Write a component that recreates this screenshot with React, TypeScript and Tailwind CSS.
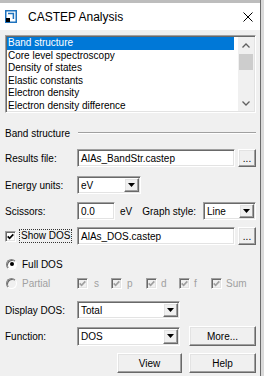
import React from "react";

const sunken =
  "border border-t-[#a0a0a0] border-l-[#a0a0a0] border-b-white border-r-white shadow-[inset_1px_1px_0_#696969,inset_-1px_-1px_0_#e3e3e3]";
const raised =
  "border border-t-white border-l-white border-b-[#696969] border-r-[#696969] shadow-[inset_-1px_-1px_0_#a0a0a0,inset_1px_1px_0_#e3e3e3] bg-[#f0f0f0]";

const listItems = [
  "Band structure",
  "Core level spectroscopy",
  "Density of states",
  "Elastic constants",
  "Electron density",
  "Electron density difference",
];

function DownArrow() {
  return (
    <svg width="7" height="4" viewBox="0 0 7 4">
      <path d="M0 0h7L3.5 4z" fill="#000" />
    </svg>
  );
}

function Chevron({ up }: { up?: boolean }) {
  return (
    <svg width="8" height="5" viewBox="0 0 8 5">
      <path
        d={up ? "M0.5 4.5L4 1l3.5 3.5" : "M0.5 0.5L4 4l3.5-3.5"}
        stroke="#606060"
        strokeWidth="1.3"
        fill="none"
      />
    </svg>
  );
}

function Select({ value, className = "" }: { value: string; className?: string }) {
  return (
    <div className={`${sunken} bg-white flex items-stretch p-px ${className}`}>
      <span className="flex-1 flex items-center pl-[2px] whitespace-nowrap">{value}</span>
      <div className={`${raised} w-[15px] flex items-center justify-center`}>
        <DownArrow />
      </div>
    </div>
  );
}

function TextBox({ value, className = "" }: { value: string; className?: string }) {
  return (
    <div className={`${sunken} bg-white flex items-center pl-[3px] whitespace-nowrap ${className}`}>
      {value}
    </div>
  );
}

function Button({ label, className = "" }: { label: string; className?: string }) {
  return (
    <div className={`${raised} flex items-center justify-center ${className}`}>{label}</div>
  );
}

function Check({ checked, disabled }: { checked?: boolean; disabled?: boolean }) {
  return (
    <div
      className={`${sunken} w-[11px] h-[11px] shrink-0 flex items-center justify-center ${
        disabled ? "bg-[#f0f0f0]" : "bg-white"
      }`}
    >
      {checked && (
        <svg width="7" height="7" viewBox="0 0 7 7">
          <path
            d="M0.7 3.4L2.6 5.3L6.3 1.4"
            stroke={disabled ? "#a0a0a0" : "#000"}
            strokeWidth="1.7"
            fill="none"
          />
        </svg>
      )}
    </div>
  );
}

function Radio({ checked, disabled }: { checked?: boolean; disabled?: boolean }) {
  return (
    <div
      className={`w-[11px] h-[11px] shrink-0 rounded-full border border-t-[#808080] border-l-[#808080] border-b-white border-r-white shadow-[inset_1px_1px_0_#696969] flex items-center justify-center ${
        disabled ? "bg-[#f0f0f0]" : "bg-white"
      }`}
    >
      {checked && <div className="w-[4px] h-[4px] rounded-full bg-black" />}
    </div>
  );
}

export default function App() {
  return (
    <div className="w-[264px] h-[376px] overflow-hidden flex bg-[#dadada] font-['Liberation_Sans',Arial,sans-serif] text-[10px] text-black">
      <div className="w-[261px] flex flex-col border-r border-[#6b6b6b]">
        <div className="h-[3px] bg-[#bdbdbd]" />
        <header className="h-[27px] bg-white flex items-center pl-[5px] pr-[7px]">
          <svg width="12" height="13" viewBox="0 0 12 13">
            <rect x="0.75" y="0.75" width="10.5" height="11.5" fill="white" stroke="#1e73be" strokeWidth="1.5" />
            <path d="M3 3.6H8.4V9" stroke="#1e73be" strokeWidth="1.5" fill="none" />
            <rect x="1" y="8" width="4" height="4" fill="#000" />
          </svg>
          <span className="ml-[11px] text-[12px] leading-none">CASTEP Analysis</span>
          <svg className="ml-auto" width="10" height="10" viewBox="0 0 10 10">
            <path d="M0.5 0.5L9.5 9.5M9.5 0.5L0.5 9.5" stroke="#000" strokeWidth="1" />
          </svg>
        </header>

        <main className="flex-1 bg-[#f0f0f0] pl-[5px] pr-[4px] flex flex-col">
          <div className={`${sunken} mt-[5px] h-[78px] bg-white flex p-px overflow-hidden shrink-0`}>
            <div className="flex-1 pr-[4px] overflow-hidden">
              {listItems.map((t, i) => (
                <div
                  key={t}
                  className={`h-[12.5px] leading-[12.5px] pl-px whitespace-nowrap ${
                    i === 0 ? "bg-[#0078d7] text-white" : ""
                  }`}
                >
                  {t}
                </div>
              ))}
            </div>
            <div className="w-[16px] bg-[#f0f0f0] flex flex-col">
              <div className="h-[16px] flex items-center justify-center">
                <Chevron up />
              </div>
              <div className="mt-px mx-px h-[16px] bg-[#cdcdcd]" />
              <div className="flex-1" />
              <div className="h-[16px] flex items-center justify-center">
                <Chevron />
              </div>
            </div>
          </div>

          <div className="mt-[14px] h-[12px] flex items-center">
            <span>Band structure</span>
            <div className="flex-1 ml-[8px] h-[2px] border-t border-t-[#a0a0a0] border-b border-b-white" />
          </div>

          <div className="mt-[10px] h-[18px] flex items-center">
            <span className="w-[72px]">Results file:</span>
            <TextBox value="AlAs_BandStr.castep" className="w-[158px] h-full" />
            <Button label="..." className="ml-auto w-[18px] h-full" />
          </div>

          <div className="mt-[9px] h-[18px] flex items-center">
            <span className="w-[72px]">Energy units:</span>
            <Select value="eV" className="w-[64px] h-full" />
          </div>

          <div className="mt-[8px] h-[18px] flex items-center">
            <span className="w-[72px]">Scissors:</span>
            <TextBox value="0.0" className="w-[38px] h-full" />
            <span className="ml-[5px]">eV</span>
            <span className="ml-[10px]">Graph style:</span>
            <Select value="Line" className="ml-auto w-[53px] h-full" />
          </div>

          <div className="mt-[7px] h-[18px] flex items-center">
            <div className="w-[72px] flex items-center">
              <Check checked />
              <span className="ml-[3px] px-px border border-dotted border-[#333] leading-[12px]">Show DOS</span>
            </div>
            <TextBox value="AlAs_DOS.castep" className="w-[158px] h-full" />
            <Button label="..." className="ml-auto w-[18px] h-full" />
          </div>

          <div className="mt-[13px] h-[12px] flex items-center pl-px">
            <Radio checked />
            <span className="ml-[5px]">Full DOS</span>
          </div>

          <div className="mt-[7px] h-[12px] flex items-center text-[#a0a0a0]">
            <div className="w-[72px] flex items-center pl-px">
              <Radio disabled />
              <span className="ml-[5px]">Partial</span>
            </div>
            <div className="w-[34px] flex items-center">
              <Check checked disabled />
              <span className="ml-[6px]">s</span>
            </div>
            <div className="w-[35px] flex items-center">
              <Check checked disabled />
              <span className="ml-[5px]">p</span>
            </div>
            <div className="w-[33px] flex items-center">
              <Check checked disabled />
              <span className="ml-[4px]">d</span>
            </div>
            <div className="w-[32px] flex items-center">
              <Check checked disabled />
              <span className="ml-[4px]">f</span>
            </div>
            <div className="flex items-center">
              <Check checked disabled />
              <span className="ml-[4px]">Sum</span>
            </div>
          </div>

          <div className="mt-[12px] h-[18px] flex items-center">
            <span className="w-[72px]">Display DOS:</span>
            <Select value="Total" className="w-[103px] h-full" />
          </div>

          <div className="mt-[7px] h-[20px] flex items-center">
            <span className="w-[72px]">Function:</span>
            <Select value="DOS" className="w-[103px] h-[19px]" />
            <Button label="More..." className="ml-auto w-[67px] h-full" />
          </div>

          <div className="mt-[7px] h-[20px] flex items-center">
            <Button label="View" className="ml-[112px] w-[65px] h-full" />
            <Button label="Help" className="ml-auto w-[67px] h-full" />
          </div>
        </main>
      </div>
    </div>
  );
}
